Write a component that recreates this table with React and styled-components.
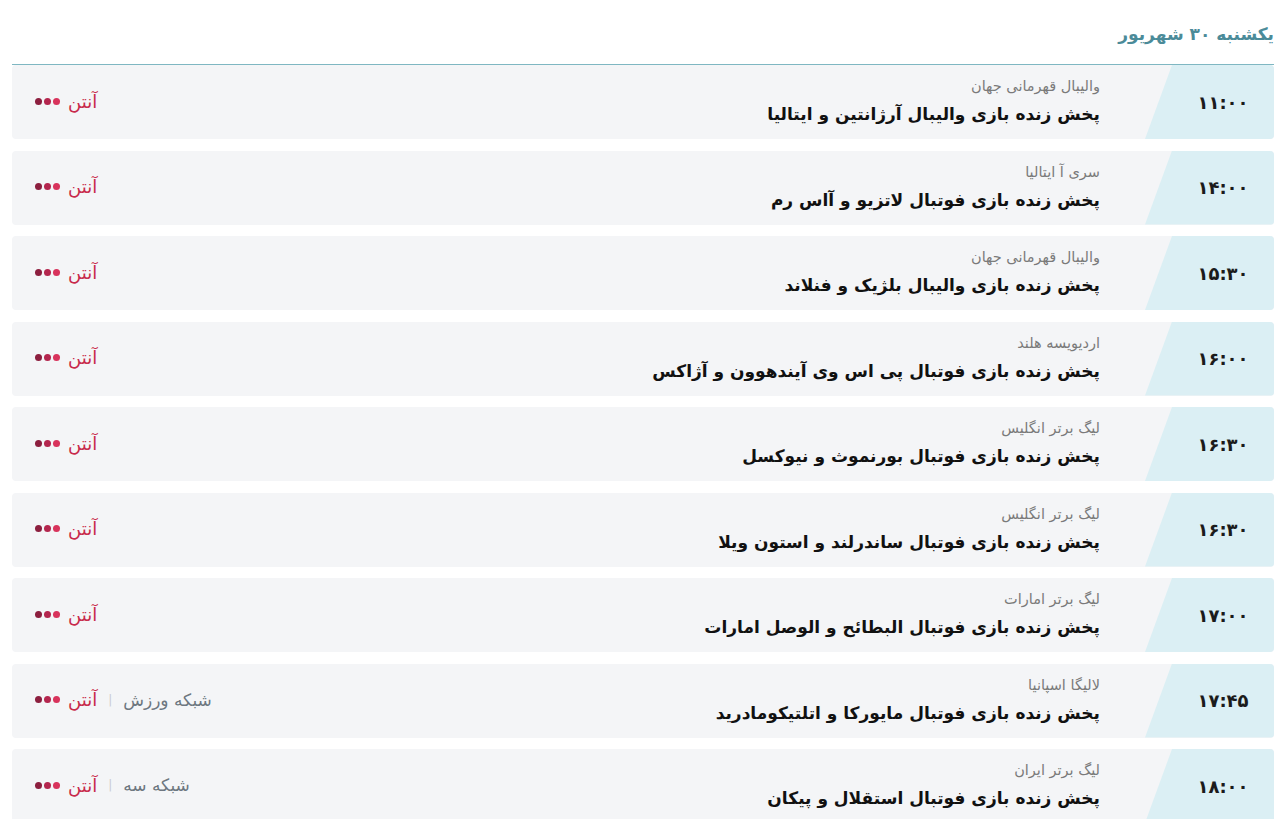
import React from "react";
import styled, { createGlobalStyle } from "styled-components";

const GlobalStyle = createGlobalStyle`
  html, body {
    margin: 0;
    padding: 0;
    background: #fff;
  }
  body {
    font-family: "DejaVu Sans", "Noto Sans", sans-serif;
    direction: rtl;
  }
`;

const programs = [
  { time: "۱۱:۰۰", league: "والیبال قهرمانی جهان", title: "پخش زنده بازی والیبال آرژانتین و ایتالیا" },
  { time: "۱۴:۰۰", league: "سری آ ایتالیا", title: "پخش زنده بازی فوتبال لاتزیو و آاس رم" },
  { time: "۱۵:۳۰", league: "والیبال قهرمانی جهان", title: "پخش زنده بازی والیبال بلژیک و فنلاند" },
  { time: "۱۶:۰۰", league: "اردیویسه هلند", title: "پخش زنده بازی فوتبال پی اس وی آیندهوون و آژاکس" },
  { time: "۱۶:۳۰", league: "لیگ برتر انگلیس", title: "پخش زنده بازی فوتبال بورنموث و نیوکسل" },
  { time: "۱۶:۳۰", league: "لیگ برتر انگلیس", title: "پخش زنده بازی فوتبال ساندرلند و استون ویلا" },
  { time: "۱۷:۰۰", league: "لیگ برتر امارات", title: "پخش زنده بازی فوتبال البطائح و الوصل امارات" },
  { time: "۱۷:۴۵", league: "لالیگا اسپانیا", title: "پخش زنده بازی فوتبال مایورکا و اتلتیکومادرید", channel: "شبکه ورزش" },
  { time: "۱۸:۰۰", league: "لیگ برتر ایران", title: "پخش زنده بازی فوتبال استقلال و پیکان", channel: "شبکه سه" },
];

const App = () => {
  return (
    <>
      <GlobalStyle />
      <Page>
        <Header>
          <DayTitle>یکشنبه ۳۰ شهریور</DayTitle>
        </Header>
        <List>
          {programs.map((p, i) => (
            <Row key={i}>
              <TimeCell>{p.time}</TimeCell>
              <Info>
                <League>{p.league}</League>
                <Title>{p.title}</Title>
              </Info>
              <Channels>
                {p.channel && (
                  <>
                    <Channel>{p.channel}</Channel>
                    <Sep>|</Sep>
                  </>
                )}
                <Antenna>آنتن</Antenna>
                <Dots>
                  <Dot $c="#d8335c" />
                  <Dot $c="#b4264e" />
                  <Dot $c="#8c1f3f" />
                </Dots>
              </Channels>
            </Row>
          ))}
        </List>
      </Page>
    </>
  );
};

const Page = styled.div`
  padding: 0 6px 0 12px;
`;

const Header = styled.div`
  height: 64px;
  display: flex;
  align-items: center;
  border-bottom: 1px solid #7fb7c2;
`;

const DayTitle = styled.h2`
  margin: 4px 0 0;
  font-size: 17px;
  font-weight: bold;
  color: #4b8b99;
`;

const List = styled.div`
  display: flex;
  flex-direction: column;
  gap: 11.5px;
`;

const Row = styled.div`
  display: flex;
  align-items: stretch;
  height: 74px;
  background: #f4f5f7;
  border-radius: 4px;
  overflow: hidden;
`;

const TimeCell = styled.div`
  width: 129px;
  flex-shrink: 0;
  background: #dbeff4;
  clip-path: polygon(27px 0, 100% 0, 100% 100%, 0 100%);
  display: flex;
  align-items: center;
  justify-content: center;
  padding-left: 27px;
  box-sizing: border-box;
  font-size: 18px;
  font-weight: bold;
  color: #1b1b1b;
  direction: ltr;
`;

const Info = styled.div`
  flex: 1;
  display: flex;
  flex-direction: column;
  justify-content: center;
  padding-right: 45px;
  gap: 10px;
  padding-bottom: 2px;
`;

const League = styled.div`
  font-size: 14.5px;
  color: #7a7a7a;
`;

const Title = styled.div`
  font-size: 17px;
  font-weight: bold;
  color: #111;
`;

const Channels = styled.div`
  display: flex;
  align-items: center;
  gap: 8px;
  padding-left: 23px;
  padding-bottom: 2px;
`;

const Channel = styled.span`
  font-size: 17px;
  color: #6d7780;
`;

const Sep = styled.span`
  font-size: 12px;
  color: #c8ccd0;
  margin: 0 3px;
`;

const Antenna = styled.span`
  font-size: 18px;
  color: #c8294b;
`;

const Dots = styled.span`
  display: flex;
  gap: 2px;
`;

const Dot = styled.span`
  width: 7px;
  height: 7px;
  border-radius: 50%;
  background: ${(p) => p.$c};
`;

export default App;
